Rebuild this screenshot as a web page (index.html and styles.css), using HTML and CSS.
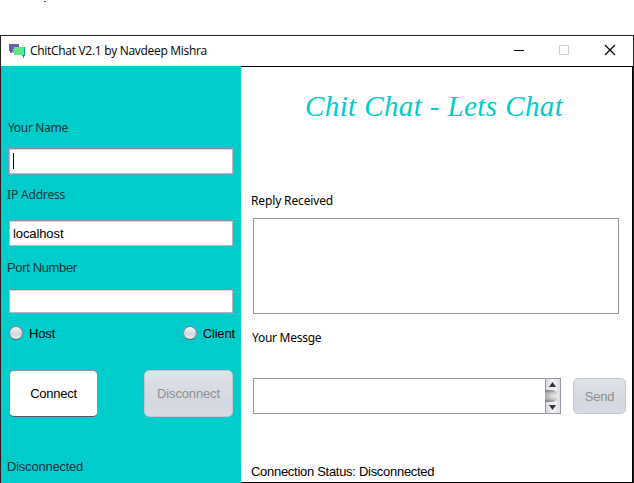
FILE: index.html
```html
<!DOCTYPE html>
<html lang="en">
<head>
<meta charset="utf-8">
<title>ChitChat</title>
<link rel="stylesheet" href="styles.css">
</head>
<body>
<div class="desktop"><i class="speck"></i></div>
<div class="window">
  <header class="titlebar">
    <svg class="logo" width="16" height="14" viewBox="0 0 16 14" shape-rendering="crispEdges">
      <path fill="#6b5cae" d="M0 0H10V8H3V9H1V7H0Z"/>
      <path fill="#00a887" d="M14 3H16V12H15V14H14V12H13V11H14Z"/>
      <path fill="#61e786" d="M5 3H15V11H5V9H4V5H5Z"/>
    </svg>
    <span class="caption">ChitChat V2.1 by Navdeep Mishra</span>
    <svg class="controls" width="103" height="12" viewBox="0 0 103 12" fill="none">
      <path stroke="#000" d="M0 6.5H10"/>
      <path stroke="#ccc" d="M45.5 1.5h9v9h-9z"/>
      <path stroke="#000" stroke-width="1.15" d="M91 1L101 11M101 1L91 11"/>
    </svg>
  </header>
  <main class="content">
    <section class="sidebar">
      <div class="label name-label">Your Name</div>
      <div class="field name focused"><i class="caret"></i></div>
      <div class="label ip-label">IP Address</div>
      <div class="field ip"><span class="host-text">localhost</span></div>
      <div class="label port-label">Port Number</div>
      <div class="field port"></div>
      <div class="radios">
        <div class="option"><i class="dot"></i><span class="option-text">Host</span></div>
        <div class="option"><i class="dot"></i><span class="option-text">Client</span></div>
      </div>
      <div class="buttons">
        <div class="button connect"><span>Connect</span></div>
        <div class="button disabled"><span class="disconnect-text">Disconnect</span></div>
      </div>
      <div class="label state">Disconnected</div>
    </section>
    <section class="chat">
      <h1 class="heading">Chit Chat - Lets Chat</h1>
      <div class="label reply-label">Reply Received</div>
      <div class="reply"></div>
      <div class="label message-label">Your Messge</div>
      <div class="compose">
        <div class="message">
          <svg class="scroll" width="15" height="34" viewBox="0 0 15 34">
            <defs>
              <linearGradient id="track"><stop stop-color="#d2d4d8"/><stop offset=".5" stop-color="#f3f4f6"/><stop offset="1" stop-color="#dcdee2"/></linearGradient>
              <linearGradient id="thumb"><stop stop-color="#808084"/><stop offset=".55" stop-color="#d2d3d7"/><stop offset="1" stop-color="#eeeff2"/></linearGradient>
              <linearGradient id="shade" x2="0" y2="1"><stop stop-color="#777" stop-opacity=".7"/><stop offset=".5" stop-color="#fff" stop-opacity=".35"/><stop offset="1" stop-color="#777" stop-opacity=".7"/></linearGradient>
            </defs>
            <path fill="url(#track)" d="M0 0H15V34H0Z"/>
            <path fill="none" stroke="#9297a1" d="M.5 0V34"/>
            <path fill="url(#thumb)" d="M0 11H8Q11 12 14 17Q11 22 8 23H0Z"/>
            <path fill="url(#shade)" d="M0 11H8Q11 12 14 17Q11 22 8 23H0Z"/>
            <path fill="#333438" d="M4 8L7.5 3L11 8ZM4 26H11L7.5 31Z"/>
          </svg>
        </div>
        <div class="button disabled send"><span class="send-text">Send</span></div>
      </div>
      <div class="label status">Connection Status: Disconnected</div>
    </section>
  </main>
</div>
</body>
</html>
```
FILE: styles.css
```css
* { box-sizing: border-box; }
body {
  margin: 0;
  width: 634px;
  height: 483px;
  overflow: hidden;
  background: #fff;
  color: #000;
  font: 13px/16px "Liberation Sans", sans-serif;
}
.desktop { height: 35px; padding: 1px 0 0 44px; }
.speck { display: block; width: 2px; height: 1px; background: #3a3aee; }
.window {
  height: 448px;
  display: flex;
  flex-direction: column;
  border: 1px solid #202020;
  border-bottom: 0;
}
.titlebar { height: 30px; display: flex; align-items: center; padding: 0 16px 0 8px; }
.logo { flex: none; }
.caption { margin-left: 5px; font: 12px/16px "Open Sans", sans-serif; letter-spacing: -0.3px; white-space: nowrap; }
.controls { margin: -2px 0 0 auto; flex: none; }
.content { flex: 1; display: flex; }
.sidebar { width: 240px; padding: 54px 0 0 8px; background: #00cccc; display: flex; flex-direction: column; }
.label { height: 16px; white-space: nowrap; }
.sidebar .label { color: #14343a; }
.name-label, .ip-label, .reply-label, .message-label { font: 12px/16px "Noto Sans", sans-serif; }
.name-label { margin-left: -1px; letter-spacing: -0.33px; }
.ip-label { margin: 13px 0 0 -2px; letter-spacing: -0.17px; }
.port-label { margin: 14px 0 0 -2px; letter-spacing: -0.36px; }
.field {
  flex: none;
  width: 224px;
  height: 26px;
  background: #fff;
  border: 1px solid #b5b9bd;
  border-top-color: #8a8d91;
  box-shadow: inset 0 1px #d5d7da;
  padding: 5px 3px 3px;
}
.name { margin-top: 12px; padding-top: 4px; }
.focused { box-shadow: inset 0 1px #d5d7da, 0 0 0 1px #6c9fc8; }
.caret { display: block; width: 1px; height: 16px; background: #000; }
.host-text { letter-spacing: -0.1px; }
.ip { margin-top: 17px; }
.port { height: 24px; margin-top: 13px; }
.radios { width: 226px; display: flex; justify-content: space-between; margin-top: 12px; }
.option { display: flex; align-items: center; height: 16px; }
.option-text { padding-top: 2px; letter-spacing: -0.15px; }
.dot {
  width: 14px;
  height: 14px;
  margin-right: 6px;
  border-radius: 50%;
  border: 1px solid #858b94;
  border-bottom-color: #55656d;
  background: linear-gradient(#f8f8fa, #d2d6de 55%, #eceef2);
}
.buttons { width: 224px; display: flex; justify-content: space-between; margin-top: 29px; }
.button {
  display: flex;
  align-items: center;
  justify-content: center;
  width: 89px;
  height: 47px;
  border-radius: 5px;
  border: 1px solid #8b9096;
  border-bottom-color: #4e555c;
  background: #fff;
}
.connect { letter-spacing: -0.25px; }
.disabled {
  border-color: #c1c5cf;
  background: linear-gradient(#dfe2e6, #d4d8e0 65%, #d8dbe3);
  color: #8e8f91;
}
.disconnect-text { letter-spacing: -0.15px; }
.state { margin: 42px 0 0 -2px; letter-spacing: -0.22px; }
.chat { flex: 1; border: solid #000; border-width: 1px 1px 1px 0; padding: 24px 0 0 10px; }
.heading {
  margin: 0 0 0 54px;
  height: 30px;
  font: italic 29px/30px "Liberation Serif", serif;
  letter-spacing: 0.4px;
  color: #00cccc;
  white-space: nowrap;
}
.reply-label { margin-top: 72px; letter-spacing: -0.14px; }
.reply { width: 366px; height: 96px; margin: 9px 0 0 2px; border: 1px solid #9297a1; }
.message-label { margin: 16px 0 0 1px; letter-spacing: -0.27px; }
.compose { display: flex; margin: 32px 0 0 2px; gap: 12px; }
.message { width: 308px; height: 36px; border: 1px solid #9297a1; display: flex; justify-content: flex-end; }
.send { width: 53px; height: 36px; }
.send-text { padding-top: 2px; letter-spacing: -0.2px; }
.status { margin-top: 50px; letter-spacing: -0.29px; }
```
